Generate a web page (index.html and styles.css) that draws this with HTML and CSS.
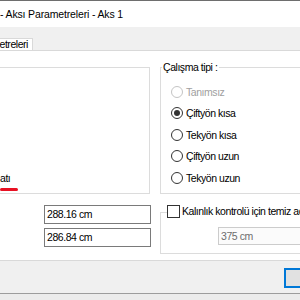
FILE: index.html
```html
<!DOCTYPE html>
<html lang="tr">
<head>
<meta charset="utf-8">
<title>Aksı Parametreleri - Aks 1</title>
<link rel="stylesheet" href="styles.css">
</head>
<body>
<div class="window">
  <div class="frame-top"></div>
  <header class="titlebar"><span class="title">- Aksı Parametreleri - Aks 1</span></header>
  <main class="client">
    <nav class="tabs"><div class="tab tab-active">Parametreleri</div></nav>
    <section class="page">
      <div class="row row-top">
        <div class="group group-left">
          <span class="field-label">atı</span>
          <span class="error-bar"></span>
        </div>
        <div class="group group-mode">
          <span class="group-title">Çalışma tipi :</span>
          <ul class="radio-list">
            <li class="radio disabled"><span class="radio-dot"></span>Tanımsız</li>
            <li class="radio checked"><span class="radio-dot"></span>Çiftyön kısa</li>
            <li class="radio"><span class="radio-dot"></span>Tekyön kısa</li>
            <li class="radio"><span class="radio-dot"></span>Çiftyön uzun</li>
            <li class="radio"><span class="radio-dot"></span>Tekyön uzun</li>
          </ul>
        </div>
      </div>
      <div class="row row-bottom">
        <div class="fields">
          <div class="textbox">288.16 cm</div>
          <div class="textbox">286.84 cm</div>
        </div>
        <div class="group group-thick">
          <label class="group-title check-title"><span class="checkbox"></span>Kalınlık kontrolü için temiz açıklık</label>
          <div class="textbox textbox-disabled">375 cm</div>
        </div>
      </div>
    </section>
    <footer class="footer"><button class="btn btn-default" type="button"></button></footer>
  </main>
  <div class="frame-bottom"></div>
</div>
</body>
</html>
```
FILE: styles.css
```css
* { box-sizing: border-box; margin: 0; padding: 0; }
html, body { width: 300px; height: 300px; overflow: hidden; background: #f0f0f0; }
body { font-family: "Liberation Sans", Arial, sans-serif; font-size: 10.5px; color: #000; letter-spacing: -0.45px; }

.window { width: 300px; height: 300px; display: flex; flex-direction: column; overflow: hidden; }
.frame-top { height: 1px; flex: none; background: #6e6e6e; }
.titlebar { height: 26px; flex: none; background: #fff; display: flex; align-items: center; white-space: nowrap; font-size: 10.5px; letter-spacing: -0.15px; }

.client { height: 266px; flex: none; background: #f0f0f0; display: flex; flex-direction: column; }

.tabs { width: 33px; height: 23px; flex: none; display: flex; align-items: flex-end; justify-content: flex-end; }
.tab { flex: none; height: 12px; padding: 0 4px 0 3px; border: 1px solid #d9d9d9; border-bottom: none; background: #fff; line-height: 11px; white-space: nowrap; }

.page { height: 211px; flex: none; width: 340px; margin-left: -20px; padding-left: 9px; background: #fff; border: 1px solid #d9d9d9; }

.row { display: flex; gap: 10px; }
.row-top { margin-top: 16px; }
.row-bottom { margin-top: 11px; align-items: flex-start; }

.group { position: relative; border: 1px solid #dcdcdc; flex: none; }
.group-title { position: absolute; background: #fff; white-space: nowrap; line-height: 13px; }

.group-left { width: 160px; height: 127px; display: flex; flex-direction: column; justify-content: flex-end; align-items: flex-start; padding: 0 0 2px 9px; }
.field-label { line-height: 14px; }
.error-bar { width: 18px; height: 3px; margin-top: 3px; background: #e81123; border-radius: 1.5px; }

.group-mode { width: 150px; height: 127px; padding: 13px 0 0 10px; }
.group-mode .group-title { top: -7px; left: 1px; padding: 0 2px 0 1px; }
.radio-list { list-style: none; }
.radio { height: 21.5px; display: flex; align-items: center; white-space: nowrap; }
.radio-dot { width: 12px; height: 12px; flex: none; margin-right: 3px; border: 1px solid #333; border-radius: 50%; background: #fff; display: grid; place-items: center; }
.radio.checked .radio-dot::after { content: ""; width: 6px; height: 6px; border-radius: 50%; background: #333; }
.radio.disabled { color: #a0a0a0; }
.radio.disabled .radio-dot { border-color: #c4c4c4; }

.fields { width: 160px; flex: none; display: flex; flex-direction: column; align-items: flex-end; gap: 4px; }
.fields .textbox { width: 107px; margin-right: -1px; }
.textbox { height: 19px; padding: 0 2px; border: 1px solid #7a7a7a; background: #fff; line-height: 17px; white-space: nowrap; overflow: hidden; }

.group-thick { width: 150px; height: 42px; margin-top: 7px; padding: 14px 0 0 57px; }
.check-title { top: -8px; left: 6px; display: flex; align-items: center; padding-right: 2px; }
.checkbox { width: 13px; height: 13px; flex: none; margin-right: 2px; border: 1px solid #333; background: #fff; }
.textbox-disabled { width: 100px; height: 18px; line-height: 16px; border-color: #cccccc; color: #6d6d6d; background: #fbfbfb; }

.footer { flex: 1; padding: 7px 0 0 284px; }
.btn { display: block; width: 75px; height: 20px; border: 2px solid #0078d7; background: #e1e1e1; }

.frame-bottom { flex: 1; border-top: 1px solid #9d9d9d; background: #ececec; }
```
